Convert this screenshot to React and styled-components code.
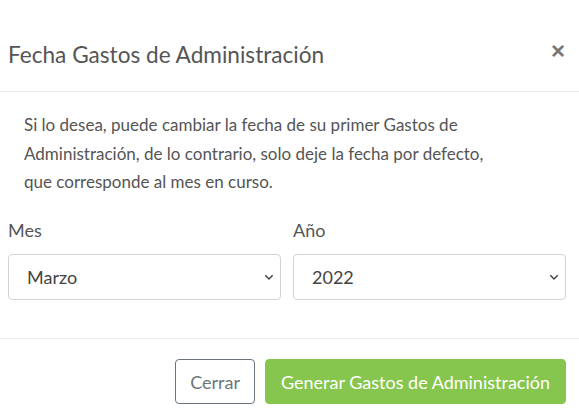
import React from "react";
import styled, { createGlobalStyle } from "styled-components";

const Global = createGlobalStyle`
  html, body { margin: 0; padding: 0; background: #fff; }
  body { font-family: "Source Sans Pro", Lato, "Noto Sans", sans-serif; color: #555; }
  * { box-sizing: border-box; }
`;

const Modal = styled.div`
  width: 579px;
  height: 417px;
  background: #fff;
  display: flex;
  flex-direction: column;
`;

const Header = styled.div`
  height: 92px;
  display: flex;
  align-items: center;
  justify-content: space-between;
  padding: 18px 14px 0 8px;
  border-bottom: 1px solid #e9ecef;
`;

const Title = styled.h5`
  margin: 0;
  font-size: 22.6px;
  font-weight: 400;
  color: #555;
  line-height: 1.2;
`;

const Close = styled.button`
  border: 0;
  background: none;
  padding: 0;
  margin-bottom: 8px;
  font-family: "Liberation Sans", Arial, sans-serif;
  font-size: 24px;
  font-weight: 700;
  color: #777;
  line-height: 1;
  cursor: pointer;
`;

const Body = styled.div`
  padding: 19px 13px 0 8px;
  height: 247px;
  border-bottom: 1px solid #e9ecef;
`;

const Text = styled.p`
  margin: 0 0 21px 16px;
  max-width: 480px;
  font-size: 17px;
  line-height: 28.5px;
  color: #555;
`;

const Row = styled.div`
  display: grid;
  grid-template-columns: 1fr 1fr;
  column-gap: 12px;
`;

const Field = styled.div`
  display: flex;
  flex-direction: column;
`;

const Label = styled.label`
  font-size: 18px;
  line-height: 24px;
  margin-bottom: 12px;
  color: #555;
`;

const SelectBox = styled.div`
  position: relative;
  height: 46px;
  border: 1px solid #ced4da;
  border-radius: 4px;
  display: flex;
  align-items: center;
  padding-left: 18px;
  font-size: 18px;
  color: #444;
`;

const Chevron = styled.svg`
  position: absolute;
  right: 6px;
  top: 50%;
  margin-top: -3px;
`;

const Footer = styled.div`
  flex: 1;
  display: flex;
  justify-content: flex-end;
  align-items: flex-start;
  gap: 10px;
  padding: 20px 13px 0 8px;
`;

const Button = styled.button`
  height: 45px;
  padding: 0 ${p => (p.$primary ? "15px" : "14px")};
  font-family: inherit;
  font-size: 18px;
  border-radius: 4px;
  border: 1px solid ${p => (p.$primary ? "#87c64e" : "#6c757d")};
  background: ${p => (p.$primary ? "#87c64e" : "#fff")};
  color: ${p => (p.$primary ? "#fff" : "#6c757d")};
  cursor: pointer;
`;

function Select({ value }) {
  return (
    <SelectBox>
      {value}
      <Chevron width="10" height="7" viewBox="0 0 10 7">
        <path d="M1.3 1.3 L5 5 L8.7 1.3" fill="none" stroke="#444" strokeWidth="1.5" />
      </Chevron>
    </SelectBox>
  );
}

export default function App() {
  return (
    <>
      <Global />
      <Modal>
        <Header>
          <Title>Fecha Gastos de Administración</Title>
          <Close>×</Close>
        </Header>
        <Body>
          <Text>
            Si lo desea, puede cambiar la fecha de su primer Gastos de
            Administración, de lo contrario, solo deje la fecha por defecto,
            que corresponde al mes en curso.
          </Text>
          <Row>
            <Field>
              <Label>Mes</Label>
              <Select value="Marzo" />
            </Field>
            <Field>
              <Label>Año</Label>
              <Select value="2022" />
            </Field>
          </Row>
        </Body>
        <Footer>
          <Button>Cerrar</Button>
          <Button $primary>Generar Gastos de Administración</Button>
        </Footer>
      </Modal>
    </>
  );
}
